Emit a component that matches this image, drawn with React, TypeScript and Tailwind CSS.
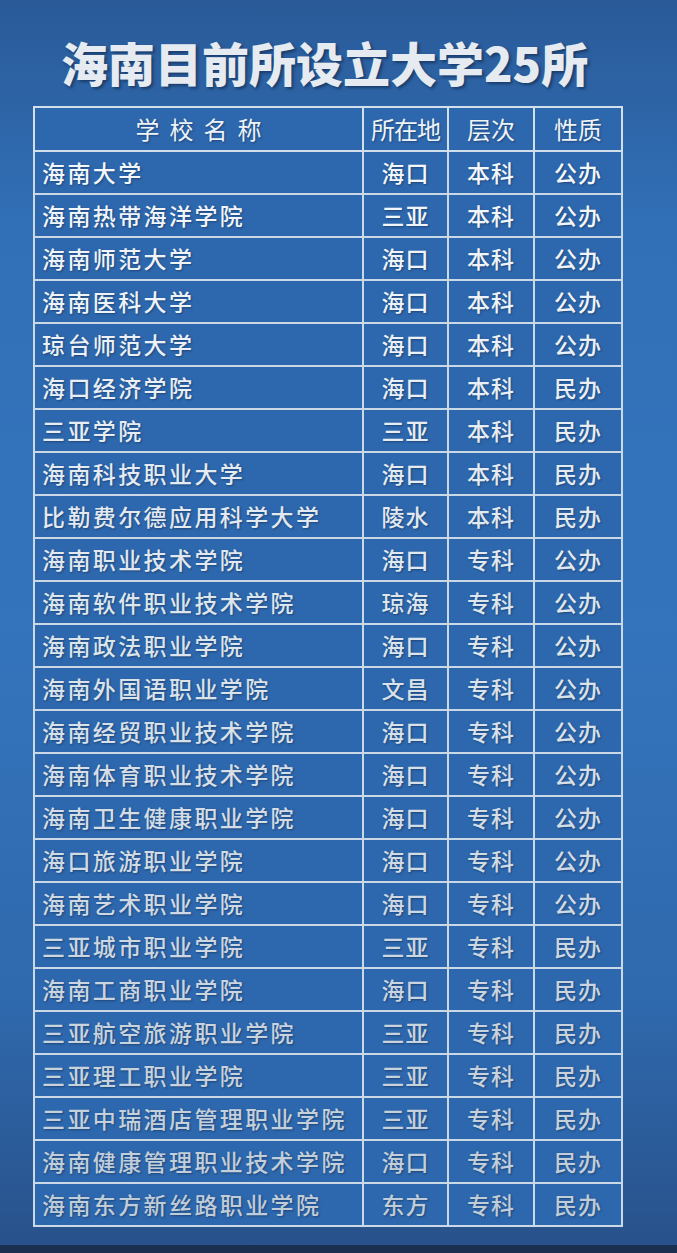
import React from 'react';

type Row = [string, string, string, string];

const rows: Row[] = [
  ['海南大学', '海口', '本科', '公办'],
  ['海南热带海洋学院', '三亚', '本科', '公办'],
  ['海南师范大学', '海口', '本科', '公办'],
  ['海南医科大学', '海口', '本科', '公办'],
  ['琼台师范大学', '海口', '本科', '公办'],
  ['海口经济学院', '海口', '本科', '民办'],
  ['三亚学院', '三亚', '本科', '民办'],
  ['海南科技职业大学', '海口', '本科', '民办'],
  ['比勒费尔德应用科学大学', '陵水', '本科', '民办'],
  ['海南职业技术学院', '海口', '专科', '公办'],
  ['海南软件职业技术学院', '琼海', '专科', '公办'],
  ['海南政法职业学院', '海口', '专科', '公办'],
  ['海南外国语职业学院', '文昌', '专科', '公办'],
  ['海南经贸职业技术学院', '海口', '专科', '公办'],
  ['海南体育职业技术学院', '海口', '专科', '公办'],
  ['海南卫生健康职业学院', '海口', '专科', '公办'],
  ['海口旅游职业学院', '海口', '专科', '公办'],
  ['海南艺术职业学院', '海口', '专科', '公办'],
  ['三亚城市职业学院', '三亚', '专科', '民办'],
  ['海南工商职业学院', '海口', '专科', '民办'],
  ['三亚航空旅游职业学院', '三亚', '专科', '民办'],
  ['三亚理工职业学院', '三亚', '专科', '民办'],
  ['三亚中瑞酒店管理职业学院', '三亚', '专科', '民办'],
  ['海南健康管理职业技术学院', '海口', '专科', '民办'],
  ['海南东方新丝路职业学院', '东方', '专科', '民办'],
];

const font = "font-['Noto_Sans_CJK_SC','Noto_Sans',sans-serif]";

// text gets a little greyer toward the bottom of the picture
const shade = (i: number) => {
  const t = i / (rows.length - 1);
  const r = Math.round(244 - t * 52);
  const g = Math.round(248 - t * 44);
  const b = Math.round(252 - t * 36);
  return `rgb(${r},${g},${b})`;
};

export default function App() {
  return (
    <div
      className={`${font} relative flex h-[1253px] w-[677px] flex-col items-start overflow-hidden bg-[linear-gradient(180deg,#2a5a98_0%,#3170b7_18%,#3474bc_50%,#2f69ad_80%,#28518a_100%)]`}
    >
      <h1 className="mt-[38px] ml-[61px] text-[47px] leading-none font-black text-[#e6ebf1] [text-shadow:2px_2px_3px_rgba(10,30,60,0.55)]">
        海南目前所设立大学25所
      </h1>

      <table className="mt-[21px] ml-[33px] w-[588px] table-fixed border-collapse border-2 border-[#d3dfeb] [text-shadow:1px_1px_2px_rgba(10,30,60,0.45)]">
        <colgroup>
          <col className="w-[329px]" />
          <col className="w-[85px]" />
          <col className="w-[86px]" />
          <col className="w-[88px]" />
        </colgroup>
        <thead>
          <tr className="h-[44px] bg-[#2d67ad] text-[24px] text-[#eef3f8]">
            <th className="border-2 border-[#d3dfeb] pl-[10px] font-normal tracking-[10px]">学校名称</th>
            <th className="border-2 border-[#d3dfeb] font-normal tracking-[-1px]">所在地</th>
            <th className="border-2 border-[#d3dfeb] font-normal">层次</th>
            <th className="border-2 border-[#d3dfeb] font-normal">性质</th>
          </tr>
        </thead>
        <tbody>
          {rows.map((r, i) => (
            <tr key={i} className="h-[43px] bg-[#2d67ad] text-[23px] font-medium" style={{ color: shade(i) }}>
              <td className="border-2 border-[#cbd8e6] pl-[7px] tracking-[2.4px] whitespace-nowrap">{r[0]}</td>
              <td className="border-2 border-[#cbd8e6] text-center tracking-[1px]">{r[1]}</td>
              <td className="border-2 border-[#cbd8e6] text-center tracking-[1px]">{r[2]}</td>
              <td className="border-2 border-[#cbd8e6] text-center tracking-[1px]">{r[3]}</td>
            </tr>
          ))}
        </tbody>
      </table>

      <div className="mt-auto h-[8px] w-full bg-[#1b3050]" />
    </div>
  );
}
